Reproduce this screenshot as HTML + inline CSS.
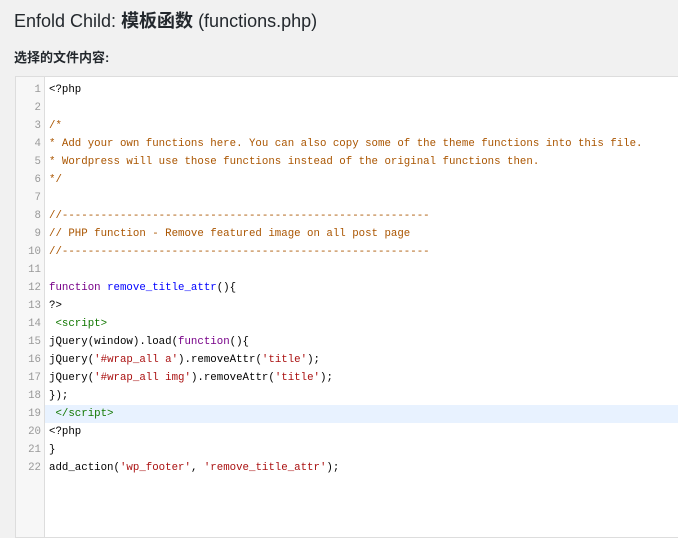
<!DOCTYPE html>
<html><head><meta charset="utf-8"><style>
body{margin:0;background:#f1f1f1;width:678px;height:496px;overflow:hidden;font-family:"Liberation Sans","Noto Sans CJK SC",sans-serif;color:#23282d}
h1{position:absolute;left:14px;top:7px;margin:0;font-size:18px;font-weight:normal;color:#23282d}
h1 b{font-weight:bold}
.sub{position:absolute;left:14px;top:47px;font-size:13px;font-weight:bold;color:#23282d}
.ed{position:absolute;left:15px;top:76px;width:680px;height:460px;background:#fff;border:1px solid #ddd}
.gut{position:absolute;left:0;top:0;width:28px;height:100%;background:#f7f7f7;border-right:1px solid #ddd}
.lines{position:absolute;left:0;top:4px;width:100%;font-family:"Liberation Mono","Noto Sans CJK SC",monospace;font-size:10.75px}
.l{height:18px;line-height:18px;position:relative;white-space:pre;color:#000}
.l .n{position:absolute;left:0;width:25px;text-align:right;color:#999}
.l .c{position:absolute;left:33px}
.hl{background:#e8f2ff;margin-left:29px}
.hl .n{left:-29px}.hl .c{left:4px}
.cm{color:#a50}.kw{color:#708}.df{color:#00f}.st{color:#a11}.tg{color:#170}
</style></head><body>
<h1>Enfold Child: <b>模板函数</b> (functions.php)</h1>
<div class="sub">选择的文件内容:</div>
<div class="ed"><div class="gut"></div><div class="lines">
<div class="l"><span class="n">1</span><span class="c">&lt;?php</span></div>
<div class="l"><span class="n">2</span><span class="c"></span></div>
<div class="l"><span class="n">3</span><span class="c cm">/*</span></div>
<div class="l"><span class="n">4</span><span class="c cm">* Add your own functions here. You can also copy some of the theme functions into this file.</span></div>
<div class="l"><span class="n">5</span><span class="c cm">* Wordpress will use those functions instead of the original functions then.</span></div>
<div class="l"><span class="n">6</span><span class="c cm">*/</span></div>
<div class="l"><span class="n">7</span><span class="c"></span></div>
<div class="l"><span class="n">8</span><span class="c cm">//---------------------------------------------------------</span></div>
<div class="l"><span class="n">9</span><span class="c cm">// PHP function - Remove featured image on all post page</span></div>
<div class="l"><span class="n">10</span><span class="c cm">//---------------------------------------------------------</span></div>
<div class="l"><span class="n">11</span><span class="c"></span></div>
<div class="l"><span class="n">12</span><span class="c"><span class="kw">function</span> <span class="df">remove_title_attr</span>(){</span></div>
<div class="l"><span class="n">13</span><span class="c">?&gt;</span></div>
<div class="l"><span class="n">14</span><span class="c"> <span class="tg">&lt;script&gt;</span></span></div>
<div class="l"><span class="n">15</span><span class="c">jQuery(window).load(<span class="kw">function</span>(){</span></div>
<div class="l"><span class="n">16</span><span class="c">jQuery(<span class="st">'#wrap_all a'</span>).removeAttr(<span class="st">'title'</span>);</span></div>
<div class="l"><span class="n">17</span><span class="c">jQuery(<span class="st">'#wrap_all img'</span>).removeAttr(<span class="st">'title'</span>);</span></div>
<div class="l"><span class="n">18</span><span class="c">});</span></div>
<div class="l hl"><span class="n">19</span><span class="c"> <span class="tg">&lt;/script&gt;</span></span></div>
<div class="l"><span class="n">20</span><span class="c">&lt;?php</span></div>
<div class="l"><span class="n">21</span><span class="c">}</span></div>
<div class="l"><span class="n">22</span><span class="c">add_action(<span class="st">'wp_footer'</span>, <span class="st">'remove_title_attr'</span>);</span></div>
</div></div>
</body></html>
